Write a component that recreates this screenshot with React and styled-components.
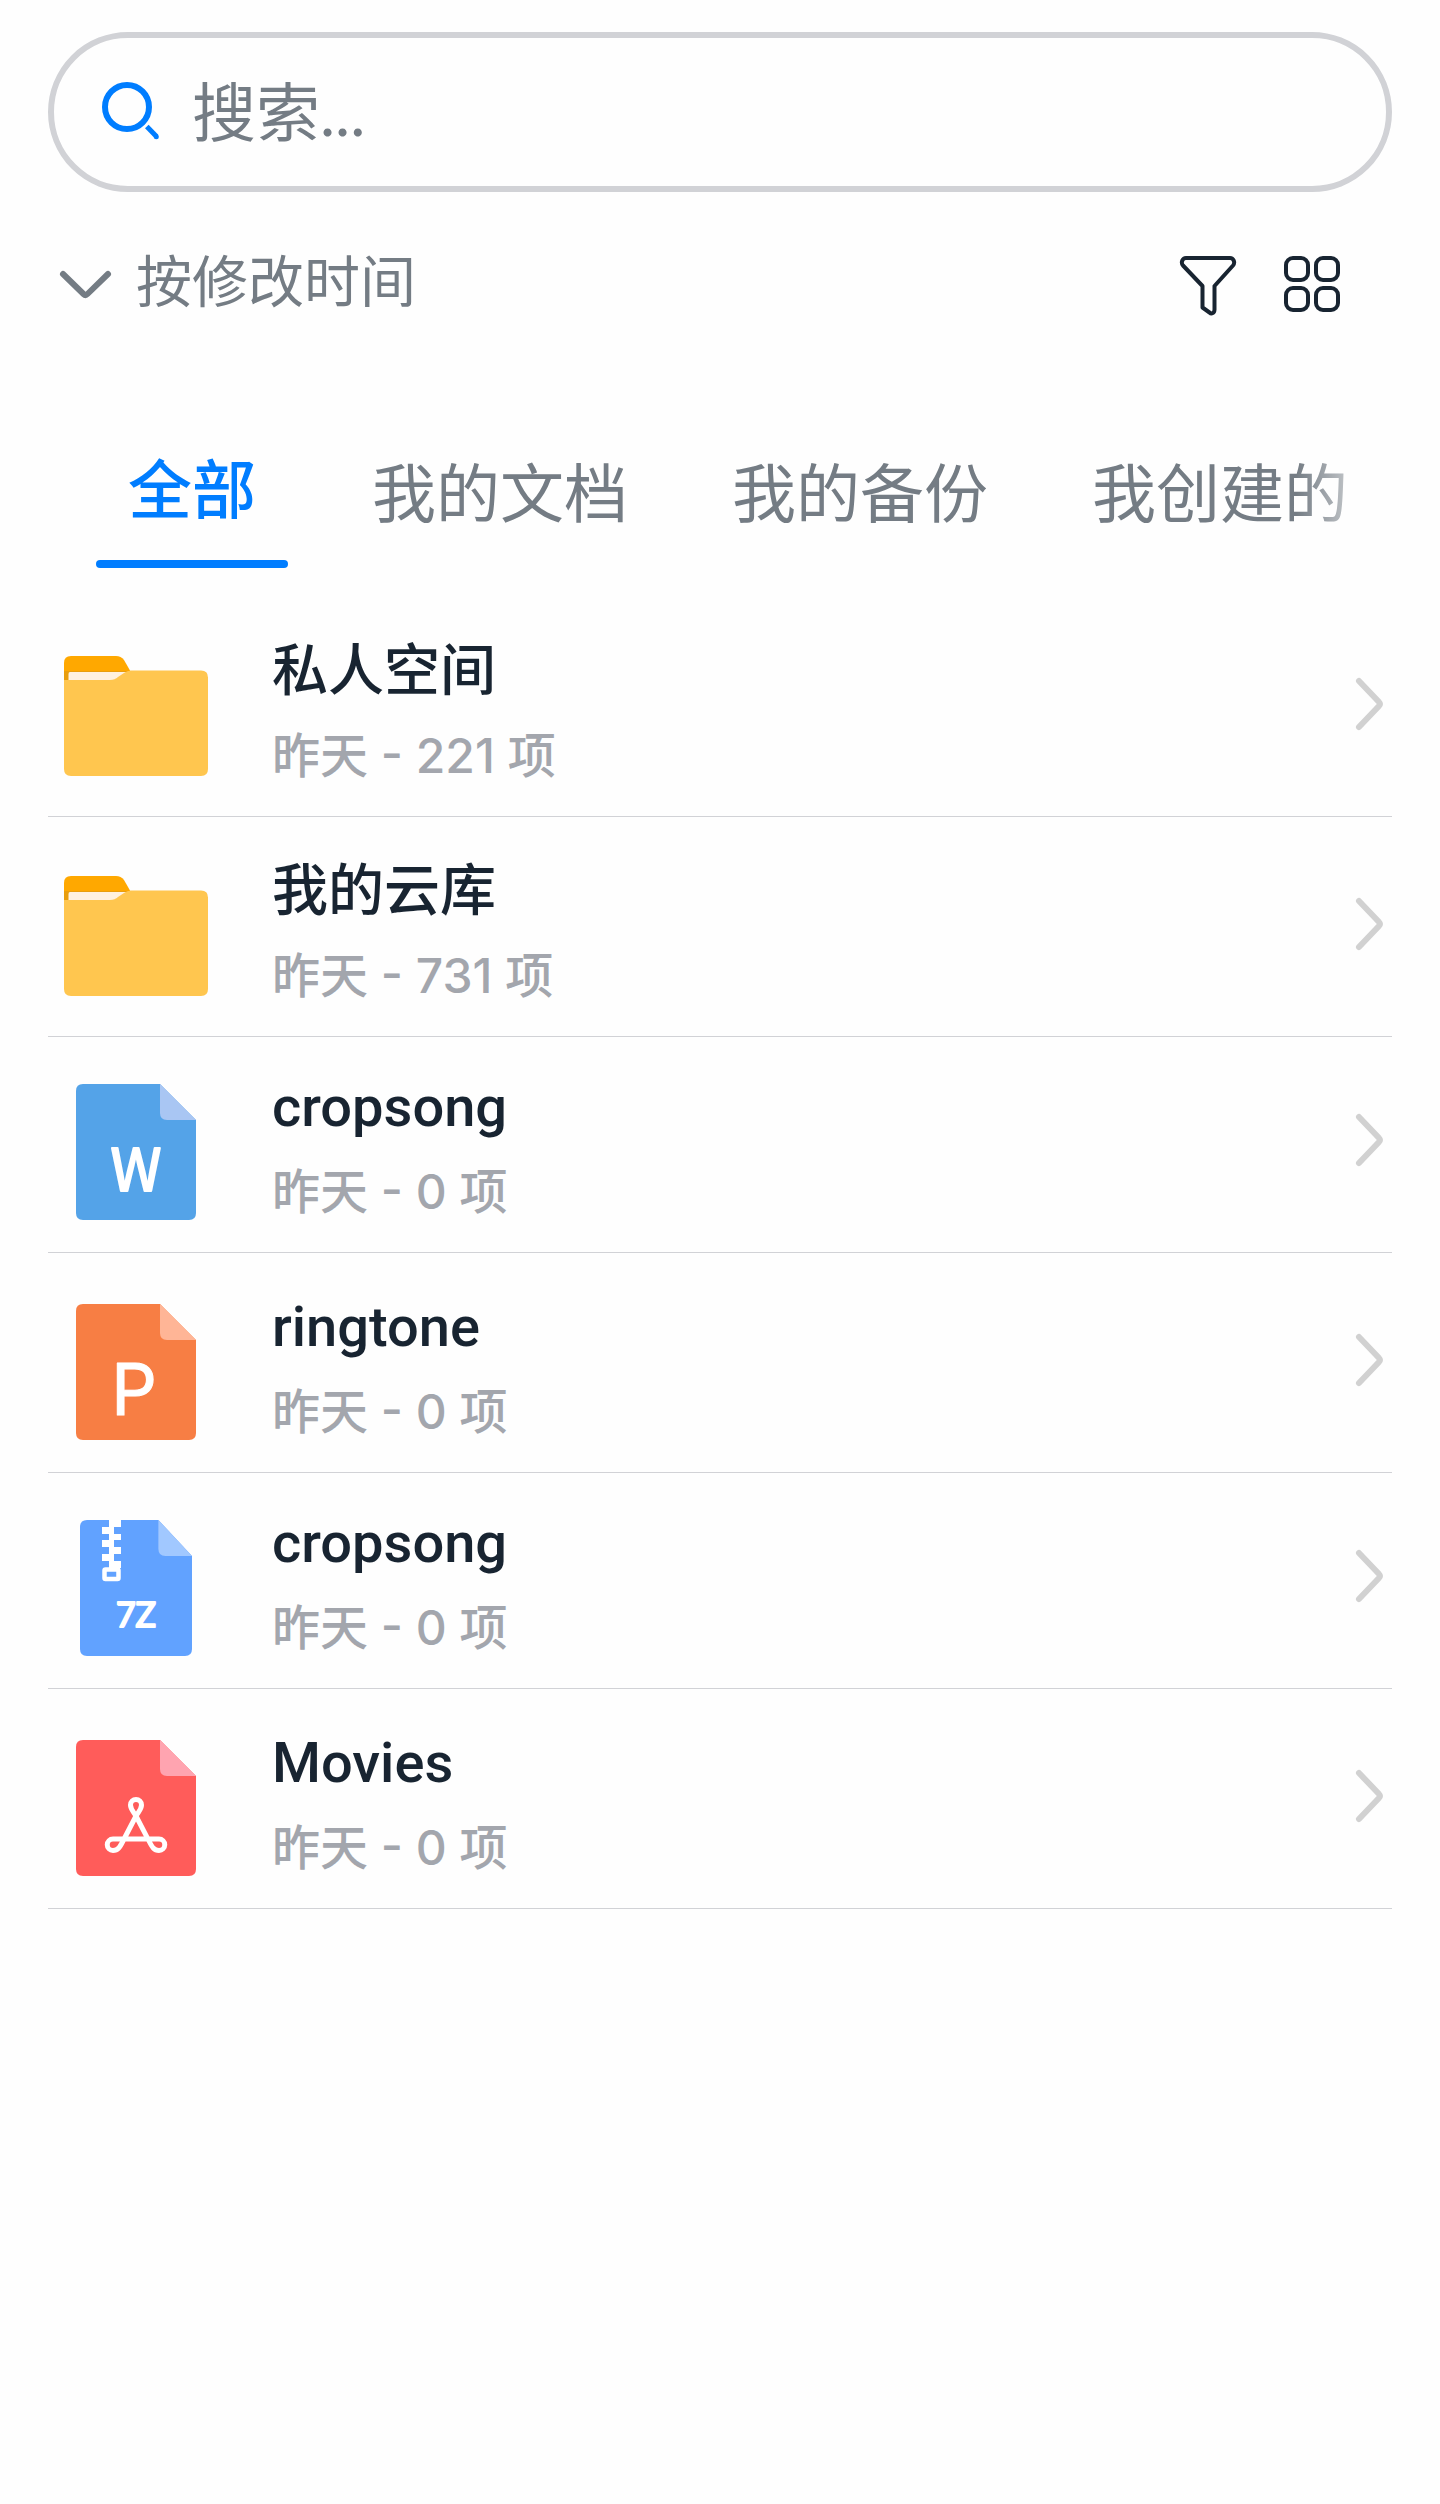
import React, { useState } from "react";
import styled, { createGlobalStyle, css } from "styled-components";

const colors = {
  page: "#fefefe",
  ink: "#182431",
  muted: "#747c84",
  faint: "#a3a6ad",
  accent: "#007dff",
  outline: "#d1d2d6",
  divider: "#d1d2d6",
  chevron: "#d1d1d1",
};

const GlobalStyle = createGlobalStyle`
  *, *::before, *::after { box-sizing: border-box; }
  html, body { margin: 0; background: ${colors.page}; }
  body, button, input, select {
    font-family: "Noto Sans CJK SC", sans-serif;
  }
`;

const Page = styled.main`
  min-height: 100vh;
  padding: 32px 48px;
  color: ${colors.ink};
`;

const SearchBox = styled.label`
  display: flex;
  align-items: center;
  height: 160px;
  padding: 0 48px;
  border: 6px solid ${colors.outline};
  border-radius: 80px;
`;

const SearchInput = styled.input`
  flex: 1;
  min-width: 0;
  height: 96px;
  margin-left: 30px;
  padding: 0;
  border: 0;
  outline: 0;
  background: transparent;
  color: ${colors.ink};
  font-family: Lato, "Noto Sans CJK SC", sans-serif;
  font-size: 64px;
  line-height: 96px;

  &::placeholder {
    color: ${colors.muted};
    opacity: 1;
  }
`;

const Toolbar = styled.div`
  display: flex;
  align-items: center;
  height: 80px;
  margin-top: 52px;
  padding: 0 48px 0 8px;
`;

const SortField = styled.label`
  display: flex;
  align-items: center;
  gap: 20px;
`;

const SortSelect = styled.select`
  appearance: none;
  height: 88px;
  margin: 0 0 12px;
  padding: 0;
  border: 0;
  outline: 0;
  background: transparent;
  color: ${colors.muted};
  font-size: 56px;
  line-height: 88px;
`;

const ToolActions = styled.div`
  display: flex;
  gap: 40px;
  margin-left: auto;
`;

const IconButton = styled.button`
  display: flex;
  width: 64px;
  height: 64px;
  padding: 0;
  border: 0;
  background: transparent;
  color: ${colors.ink};
  cursor: pointer;
`;

const Tabs = styled.div`
  display: flex;
  height: 128px;
  margin-top: 116px;
  padding-left: 48px;
  overflow: hidden;
  mask-image: linear-gradient(to left, transparent, #000 96px);
`;

const Tab = styled.button`
  display: flex;
  flex: none;
  flex-direction: column;
  justify-content: space-between;
  height: 128px;
  padding: 4px 52px 0;
  border: 0;
  background: transparent;
  color: ${colors.muted};
  font-size: 64px;
  line-height: 90px;
  white-space: nowrap;
  cursor: pointer;

  ${({ $active }) =>
    $active &&
    css`
      margin-right: 32px;
      padding: 0 32px;
      color: ${colors.accent};
      font-weight: 500;

      &::after {
        content: "";
        align-self: stretch;
        height: 8px;
        margin: 0 -32px;
        border-radius: 4px;
        background: ${colors.accent};
      }
    `}
`;

const FileList = styled.ul`
  margin: 29px 0 0;
  padding: 0;
  list-style: none;
`;

const FileItem = styled.li`
  display: flex;
  align-items: flex-end;
  height: 220px;
  border-bottom: 1px solid ${colors.divider};

  &:nth-child(2n + 3) {
    height: 216px;
  }
`;

const FileLink = styled.a`
  display: flex;
  flex: 1;
  align-items: center;
  height: 200px;
  padding: 0 8px 0 16px;
  color: inherit;
  text-decoration: none;
`;

const IconSlot = styled.span`
  display: flex;
  flex: none;
  justify-content: center;
  width: 144px;
`;

const FileText = styled.span`
  display: flex;
  flex: 1;
  flex-direction: column;
  min-width: 0;
  height: 184px;
  margin-left: 64px;
`;

const FileName = styled.span`
  font-family: Roboto, "Noto Sans CJK SC", sans-serif;
  font-size: 56px;
  font-weight: 500;
  line-height: 94px;
`;

const FileMeta = styled.span`
  color: ${colors.faint};
  font-family: Inter, "Noto Sans CJK SC", sans-serif;
  font-size: 48px;
  font-weight: 500;
  line-height: 76px;
`;

const ChevronSlot = styled.span`
  display: flex;
  flex: none;
  padding-bottom: 24px;
`;

const SearchIcon = () => (
  <svg width="60" height="60" viewBox="0 0 60 60" fill="none" stroke={colors.accent} aria-hidden="true">
    <circle cx="25" cy="25" r="22" strokeWidth="6" />
    <path d="M44.800 44.500L54.500 54.500" strokeWidth="5" />
    <circle cx="54.300" cy="54.700" r="2.500" fill={colors.accent} stroke="none" />
  </svg>
);

const DownIcon = () => (
  <svg width="60" height="60" viewBox="0 0 60 60" fill="none" stroke={colors.muted} strokeWidth="6" strokeLinecap="round" strokeLinejoin="round" aria-hidden="true">
    <path d="M7 20L27.500 40Q29.500 42 31.500 40L52 20" />
  </svg>
);

const FilterIcon = () => (
  <svg width="64" height="64" viewBox="0 0 64 64" fill="none" stroke="currentColor" strokeWidth="4" strokeLinejoin="round" aria-hidden="true">
    <path d="M10 6H54C57.500 6 59.500 10.500 57 13.500L38.500 34V57.500C38.500 61 35.500 62.500 33.500 60.500L26.500 55.500V34L7 13.500C4.500 10.500 6.500 6 10 6Z" />
  </svg>
);

const GridIcon = () => (
  <svg width="64" height="64" viewBox="0 0 64 64" fill="none" stroke="currentColor" strokeWidth="4" aria-hidden="true">
    <rect x="6" y="6" width="22" height="22" rx="7" />
    <rect x="36" y="6" width="22" height="22" rx="7" />
    <rect x="6" y="36" width="22" height="22" rx="7" />
    <rect x="36" y="36" width="22" height="22" rx="7" />
  </svg>
);

const ChevronIcon = () => (
  <svg width="32" height="60" viewBox="0 0 32 60" fill="none" stroke={colors.chevron} strokeWidth="6" strokeLinecap="round" strokeLinejoin="round" aria-hidden="true">
    <path d="M7 7L27 28Q29 30 27 32L7 53" />
  </svg>
);

const FolderIcon = () => (
  <svg width="144" height="120" viewBox="0 0 144 120" aria-hidden="true">
    <path d="M0 7Q0 0 7 0H52Q57 0 60 4L68 18V30H0Z" fill="#ffa800" />
    <path d="M0 15H66V26H0Z" fill="#e99e0d" />
    <path d="M6 16H66V26H4.500V18Q4.500 16 6 16Z" fill="#fff1e0" />
    <path d="M0 24H46Q51 24 54 21L60 17Q63 14.500 67 14.500H137Q144 14.500 144 21.500V113Q144 120 137 120H7Q0 120 0 113Z" fill="#ffc64f" />
  </svg>
);

const DocumentIcon = ({ width = 120, color, fold, children }) => (
  <svg width={width} height="136" viewBox={`0 0 ${width} 136`} aria-hidden="true">
    <path d={`M7 0H${width * 0.7}L${width} 36V129Q${width} 136 ${width - 7} 136H7Q0 136 0 129V7Q0 0 7 0Z`} fill={color} />
    <path d={`M${width * 0.7} 0L${width} 36H${width * 0.7 + 7}Q${width * 0.7} 36 ${width * 0.7} 29Z`} fill={fold} />
    {children}
  </svg>
);

const IconLetters = styled.text`
  fill: #ffffff;
  stroke: #ffffff;
  stroke-width: ${({ $stroke }) => $stroke}px;
  stroke-linejoin: round;
  font-family: ${({ $font = '"Noto Sans CJK SC"' }) => $font}, sans-serif;
  font-size: ${({ $size }) => $size}px;
  text-anchor: middle;
`;

const WordIcon = () => (
  <DocumentIcon color="#54a3e8" fold="#a9c6f3">
    <IconLetters x="60" y="107" $size={58} $stroke={2}>W</IconLetters>
  </DocumentIcon>
);

const SlidesIcon = () => (
  <DocumentIcon color="#f77e44" fold="#ffb596">
    <IconLetters x="58" y="111" $font="Inter" $size={72} $stroke={1}>P</IconLetters>
  </DocumentIcon>
);

const ArchiveIcon = () => (
  <DocumentIcon width={112} color="#61a2ff" fold="#a1c8ff">
    <path d="M29 0H41V7H34V14H41V20H34V27H41V34H34V41H41V48H29V41H22V34H29V27H22V20H29V14H22V7H29Z" fill="#ffffff" />
    <rect x="24.500" y="49.500" width="14" height="9.500" rx="1" fill="none" stroke="#ffffff" strokeWidth="4.500" />
    <IconLetters x="56" y="107" $font="Lato" $size={34} $stroke={2}>7Z</IconLetters>
  </DocumentIcon>
);

const PdfIcon = () => (
  <DocumentIcon color="#ff5c5a" fold="#ffa4b0">
    <path
      d="M60 76C57 71 54.500 69 54.500 65A5.500 5.500 0 0 1 65.500 65C65.500 69 63 71 60 76L47 101C44 107 42 110.500 37 110.500A5.700 5.700 0 0 1 37 99H83A5.700 5.700 0 0 1 83 110.500C78 110.500 76 107 73 101Z"
      fill="none"
      stroke="#ffffff"
      strokeWidth="5"
      strokeLinejoin="round"
    />
  </DocumentIcon>
);

const tabs = ["全部", "我的文档", "我的备份", "我创建的"];

const files = [
  { name: "私人空间", meta: "昨天 - 221 项", Icon: FolderIcon },
  { name: "我的云库", meta: "昨天 - 731 项", Icon: FolderIcon },
  { name: "cropsong", meta: "昨天 - 0 项", Icon: WordIcon },
  { name: "ringtone", meta: "昨天 - 0 项", Icon: SlidesIcon },
  { name: "cropsong", meta: "昨天 - 0 项", Icon: ArchiveIcon },
  { name: "Movies", meta: "昨天 - 0 项", Icon: PdfIcon },
];

export default function App() {
  const [active, setActive] = useState(0);

  return (
    <>
      <GlobalStyle />
      <Page>
        <SearchBox>
          <SearchIcon />
          <SearchInput type="text" placeholder="搜索..." aria-label="搜索" />
        </SearchBox>

        <Toolbar>
          <SortField>
            <DownIcon />
            <SortSelect aria-label="按修改时间">
              <option>按修改时间</option>
            </SortSelect>
          </SortField>
          <ToolActions>
            <IconButton type="button" aria-label="筛选">
              <FilterIcon />
            </IconButton>
            <IconButton type="button" aria-label="网格">
              <GridIcon />
            </IconButton>
          </ToolActions>
        </Toolbar>

        <Tabs role="tablist">
          {tabs.map((tab, index) => (
            <Tab
              key={tab}
              type="button"
              role="tab"
              aria-selected={index === active}
              $active={index === active}
              onClick={() => setActive(index)}
            >
              {tab}
            </Tab>
          ))}
        </Tabs>

        <FileList>
          {files.map(({ name, meta, Icon }, index) => (
            <FileItem key={index}>
              <FileLink href="#">
                <IconSlot>
                  <Icon />
                </IconSlot>
                <FileText>
                  <FileName>{name}</FileName>
                  <FileMeta>{meta}</FileMeta>
                </FileText>
                <ChevronSlot>
                  <ChevronIcon />
                </ChevronSlot>
              </FileLink>
            </FileItem>
          ))}
        </FileList>
      </Page>
    </>
  );
}
